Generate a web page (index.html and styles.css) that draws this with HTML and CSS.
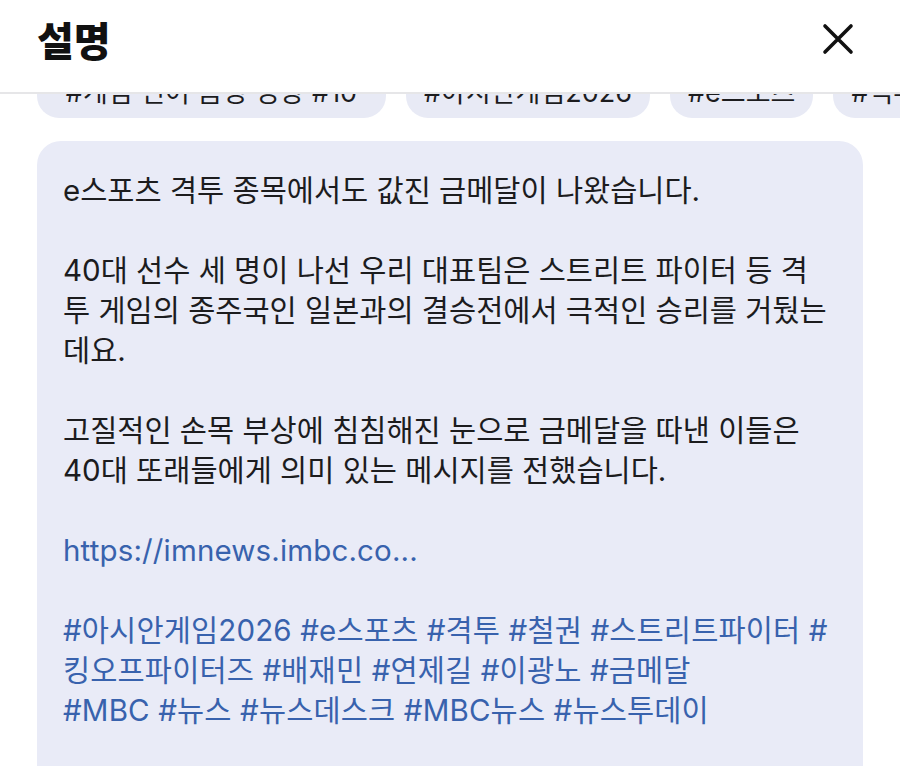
FILE: index.html
```
<!DOCTYPE html>
<html lang="ko">
<head>
<meta charset="utf-8">
<link rel="stylesheet" href="styles.css">
</head>
<body>
<header class="top">
  <h1 class="title">설명</h1>
  <button class="close" aria-label="닫기">
    <svg viewBox="0 0 32 32" width="32" height="32"><path d="M3 3 L29 29 M29 3 L3 29" stroke="#111" stroke-width="3.6" stroke-linecap="round" fill="none"/></svg>
  </button>
</header>
<main class="scroll">
  <div class="chips">
    <span class="chip">#게임 언어 음성 영상 #10</span>
    <span class="chip">#아시안게임2026</span>
    <span class="chip">#e스포츠</span>
    <span class="chip">#격투</span>
  </div>
  <section class="card">
    <p class="para">e스포츠 격투 종목에서도 값진 금메달이 나왔습니다.</p>
    <p class="para">40대 선수 세 명이 나선 우리 대표팀은 스트리트 파이터 등 격<br>투 게임의 종주국인 일본과의 결승전에서 극적인 승리를 거뒀는<br>데요.</p>
    <p class="para">고질적인 손목 부상에 침침해진 눈으로 금메달을 따낸 이들은<br>40대 또래들에게 의미 있는 메시지를 전했습니다.</p>
    <p class="para link">https://imnews.imbc.co...</p>
    <p class="para link">#아시안게임2026 #e스포츠 #격투 #철권 #스트리트파이터 #<br>킹오프파이터즈 #배재민 #연제길 #이광노 #금메달<br>#MBC #뉴스 #뉴스데스크 #MBC뉴스 #뉴스투데이</p>
  </section>
</main>
</body>
</html>
```
FILE: styles.css
```
* { box-sizing: border-box; }
html, body { margin: 0; padding: 0; background: #fff; }
body {
  width: 900px;
  height: 766px;
  overflow: hidden;
  font-family: Inter, "Noto Sans CJK KR", sans-serif;
  color: #1c1c1e;
  display: flex;
  flex-direction: column;
}
.top {
  height: 94px;
  flex: none;
  display: flex;
  align-items: center;
  justify-content: space-between;
  padding: 0 46px 14px 37px;
  border-bottom: 2px solid #e6e6e8;
  background: #fff;
  position: relative;
  z-index: 2;
}
.title {
  margin: 0;
  font-family: "Noto Sans CJK KR", sans-serif;
  font-weight: 900;
  font-size: 40px;
  line-height: 1;
  color: #111;
}
.close {
  border: 0;
  background: none;
  padding: 0;
  width: 32px;
  height: 32px;
  display: block;
}
.close svg { display: block; }
.scroll {
  flex: 1;
  overflow: hidden;
}
.chips {
  margin-top: -26px;
  display: flex;
  gap: 20px;
  padding-left: 37px;
  white-space: nowrap;
}
.chip {
  flex: none;
  height: 50px;
  line-height: 50px;
  padding: 0 18px;
  border-radius: 22px;
  background: #e8eaf5;
  font-size: 27px;
  color: #1c1c1e;
  text-align: center;
}
.chip:nth-child(1) { width: 349px; }
.card {
  margin: 23px 37px 0 37px;
  background: #e9ebf7;
  border-radius: 24px;
  padding: 29px 20px 40px 26px;
  min-height: 700px;
}
.para {
  margin: 0 0 40px 0;
  font-size: 29.5px;
  line-height: 40px;
  white-space: nowrap;
}
.link { color: #3862ad; letter-spacing: 0.15px; }
```
